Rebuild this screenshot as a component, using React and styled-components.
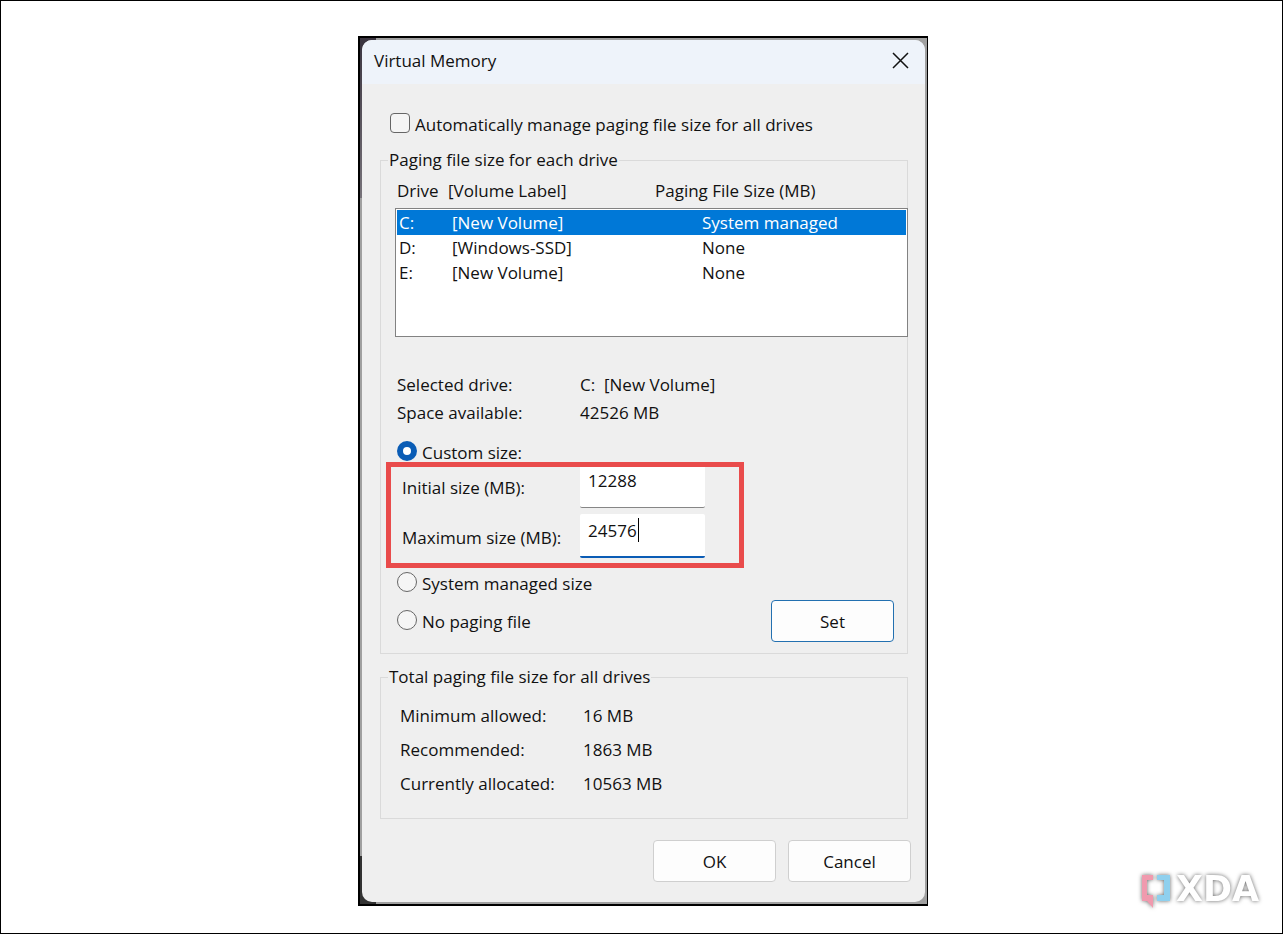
import React, { useState } from 'react';
import styled, { createGlobalStyle } from 'styled-components';

const GlobalStyle = createGlobalStyle`
    * {
        box-sizing: border-box;
    }
    body {
        margin: 0;
        background: #fff;
        color: #111;
        font-family: "Open Sans", "Noto Sans", sans-serif;
        font-size: 17px;
        line-height: 24px;
    }
    input, button {
        font: inherit;
        color: inherit;
    }
`

const Page = styled.main`
    position: relative;
    display: flex;
    justify-content: center;
    align-items: flex-start;
    min-height: 100vh;
    padding: 35px 0 27px 3px;
    border: 1px solid #000;
`

const Frame = styled.div`
    width: 570px;
    padding: 2px;
    border: 2px solid #000;
    border-right-width: 1px;
    background:
        linear-gradient(#3b3540, #3b3540) left top / 16px 12px no-repeat,
        linear-gradient(#3b3540, #77737a) left top / 2px 160px no-repeat,
        linear-gradient(#333, #333) left bottom / 16px 48px no-repeat,
        #a0a0a0;
`

const Dialog = styled.section`
    border-radius: 10px;
    background: #efefef;
    overflow: hidden;
`

const TitleBar = styled.header`
    display: flex;
    align-items: center;
    justify-content: space-between;
    height: 44px;
    padding: 0 16px 3px 12px;
    background: #eef3fa;
`

const Title = styled.h1`
    margin: 0;
    font-size: 17px;
    font-weight: 400;
`

const CloseButton = styled.button`
    display: flex;
    padding: 0;
    border: 0;
    background: none;
`

const Body = styled.div`
    padding: 27px 17px 20px 18px;
`

const Choice = styled.label`
    display: flex;
    align-items: center;
    gap: 5px;
    height: 24px;
    padding-left: ${props => props.$inset}px;
    span {
        padding-top: 3px;
    }
`

const Checkbox = styled.input`
    appearance: none;
    width: 20px;
    height: 20px;
    margin: 0;
    border: 1px solid #666;
    border-radius: 4px;
    background: #f5f5f5;
    &:checked {
        background: #0a5cb5;
    }
`

const Radio = styled.input`
    appearance: none;
    width: 20px;
    height: 20px;
    margin: 0;
    border: 1px solid #666;
    border-radius: 50%;
    background: #f5f5f5;
    &:checked {
        border: 6px solid #0a5cb5;
        background: #fff;
    }
`

const Group = styled.fieldset`
    min-width: 0;
    margin: ${props => props.$top}px 0 0;
    padding: 0;
    border: 1px solid #dadada;
`

const Legend = styled.legend`
    margin-left: 7px;
    padding: 0 1px;
`

const GroupContent = styled.div`
    padding: ${props => props.$pad};
`

const DriveTable = styled.table`
    display: block;
    margin-right: -1px;
    text-align: left;
`

const DriveHead = styled.thead`
    display: block;
    padding: 0 2px 5px;
    tr {
        display: grid;
        grid-template-columns: 51px 207px 1fr;
    }
    th {
        padding: 0;
        font-weight: 400;
    }
`

const DriveBody = styled.tbody`
    display: block;
    height: 129px;
    padding: 1px;
    border: 1px solid #828282;
    background: #fff;
`

const DriveRow = styled.tr`
    display: grid;
    grid-template-columns: 53px 250px 1fr;
    height: 25px;
    padding-left: 2px;
    background: ${props => props.$selected ? '#0078d7' : 'none'};
    color: ${props => props.$selected ? '#fff' : 'inherit'};
    td {
        padding: 1px 0 0;
    }
`

const Details = styled.dl`
    display: grid;
    grid-template-columns: 183px 1fr;
    margin: ${props => props.$margin};
    line-height: ${props => props.$line}px;
    dd {
        margin: 0;
        white-space: pre;
    }
`

const SizeFields = styled.div`
    position: relative;
    display: grid;
    grid-template-columns: 178px 125px;
    gap: 6px 0;
    align-items: center;
    margin: 1px 0 12px;
    padding-left: 7px;
    label {
        padding-top: 3px;
    }
`

const Highlight = styled.div`
    position: absolute;
    top: -2px;
    left: -9px;
    width: 358px;
    height: 106px;
    border: 5px solid #e94b4b;
    pointer-events: none;
`

const Field = styled.div`
    position: relative;
`

const SizeInput = styled.input`
    display: block;
    width: 100%;
    height: 44px;
    padding: 4px 8px 14px;
    border: 0;
    border-bottom: ${props => props.$active ? '2px solid #0a5cb5' : '1px solid #868686'};
    border-radius: 2px;
    background: #fff;
    line-height: 24px;
    outline: none;
    caret-color: transparent;
`

const Caret = styled.span`
    position: absolute;
    top: 4px;
    left: 58px;
    width: 1px;
    height: 24px;
    background: #000;
`

const Options = styled.div`
    display: flex;
    justify-content: space-between;
    align-items: flex-end;
    padding-right: 13px;
`

const OptionList = styled.div`
    display: flex;
    flex-direction: column;
    gap: 14px;
    padding-bottom: 10px;
`

const Button = styled.button`
    width: 123px;
    height: 42px;
    padding: 1px 0 0;
    border: 1px solid ${props => props.$primary ? '#2370b0' : '#cfcfcf'};
    border-radius: 4px;
    background: #fdfdfd;
`

const Footer = styled.footer`
    display: flex;
    justify-content: flex-end;
    gap: 12px;
    margin: 21px -3px 0 0;
`

const Watermark = styled.svg`
    position: absolute;
    right: 14px;
    bottom: 17px;
    filter: drop-shadow(0 0 2px rgba(0, 0, 0, 0.6));
`

const drives = [
    { letter: 'C:', label: '[New Volume]', size: 'System managed' },
    { letter: 'D:', label: '[Windows-SSD]', size: 'None' },
    { letter: 'E:', label: '[New Volume]', size: 'None' },
]

function DriveList() {
    return (
        <DriveTable>
            <DriveHead>
                <tr>
                    <th>Drive</th>
                    <th>[Volume Label]</th>
                    <th>Paging File Size (MB)</th>
                </tr>
            </DriveHead>
            <DriveBody>
                {drives.map((drive, index) => (
                    <DriveRow key={drive.letter} $selected={index === 0}>
                        <td>{drive.letter}</td>
                        <td>{drive.label}</td>
                        <td>{drive.size}</td>
                    </DriveRow>
                ))}
            </DriveBody>
        </DriveTable>
    )
}

function Logo() {
    return (
        <Watermark width="132" height="50" viewBox="0 0 132 50" aria-label="XDA">
            <path fill="#f09aae" d="M6 9h11v5h-6v15h6v13l-6-7H6z" />
            <path fill="#8fd0ee" d="M21 9h13v26H21v-6h7V14h-7z" />
            <text x="40" y="35" fill="#fff" fontFamily="DejaVu Sans, sans-serif" fontSize="35" fontWeight="700">XDA</text>
        </Watermark>
    )
}

function App() {
    const [auto, setAuto] = useState(false)
    const [mode, setMode] = useState('custom')
    const [initial, setInitial] = useState('12288')
    const [maximum, setMaximum] = useState('24576')

    const radio = (value) => (
        <Radio
            type="radio"
            name="mode"
            checked={mode === value}
            onChange={() => setMode(value)}
        />
    )

    return (
        <Page>
            <GlobalStyle />
            <Frame>
                <Dialog>
                    <TitleBar>
                        <Title>Virtual Memory</Title>
                        <CloseButton aria-label="Close">
                            <svg width="17" height="17" viewBox="0 0 17 17" stroke="#111" strokeWidth="1.5">
                                <path d="M1 1l15 15M16 1L1 16" />
                            </svg>
                        </CloseButton>
                    </TitleBar>
                    <Body>
                        <Choice $inset={10}>
                            <Checkbox type="checkbox" checked={auto} onChange={() => setAuto(!auto)} />
                            <span>Automatically manage paging file size for all drives</span>
                        </Choice>

                        <Group $top={13}>
                            <Legend>Paging file size for each drive</Legend>
                            <GroupContent $pad="7px 0 11px 14px">
                                <DriveList />
                                <Details $margin="34px 0 12px 2px" $line={28}>
                                    <dt>Selected drive:</dt>
                                    <dd>{'C:  [New Volume]'}</dd>
                                    <dt>Space available:</dt>
                                    <dd>42526 MB</dd>
                                </Details>
                                <Choice $inset={2}>{radio('custom')}<span>Custom size:</span></Choice>
                                <SizeFields>
                                    <label htmlFor="initial">Initial size (MB):</label>
                                    <Field>
                                        <SizeInput id="initial" value={initial} onChange={e => setInitial(e.target.value)} />
                                    </Field>
                                    <label htmlFor="maximum">Maximum size (MB):</label>
                                    <Field>
                                        <SizeInput id="maximum" $active value={maximum} onChange={e => setMaximum(e.target.value)} />
                                        <Caret />
                                    </Field>
                                    <Highlight />
                                </SizeFields>
                                <Options>
                                    <OptionList>
                                        <Choice $inset={2}>{radio('system')}<span>System managed size</span></Choice>
                                        <Choice $inset={2}>{radio('none')}<span>No paging file</span></Choice>
                                    </OptionList>
                                    <Button $primary>Set</Button>
                                </Options>
                            </GroupContent>
                        </Group>

                        <Group $top={11}>
                            <Legend>Total paging file size for all drives</Legend>
                            <GroupContent $pad="10px 0 17px 19px">
                                <Details $margin="0" $line={34}>
                                    <dt>Minimum allowed:</dt>
                                    <dd>16 MB</dd>
                                    <dt>Recommended:</dt>
                                    <dd>1863 MB</dd>
                                    <dt>Currently allocated:</dt>
                                    <dd>10563 MB</dd>
                                </Details>
                            </GroupContent>
                        </Group>

                        <Footer>
                            <Button>OK</Button>
                            <Button>Cancel</Button>
                        </Footer>
                    </Body>
                </Dialog>
            </Frame>
            <Logo />
        </Page>
    )
}

export default App;
